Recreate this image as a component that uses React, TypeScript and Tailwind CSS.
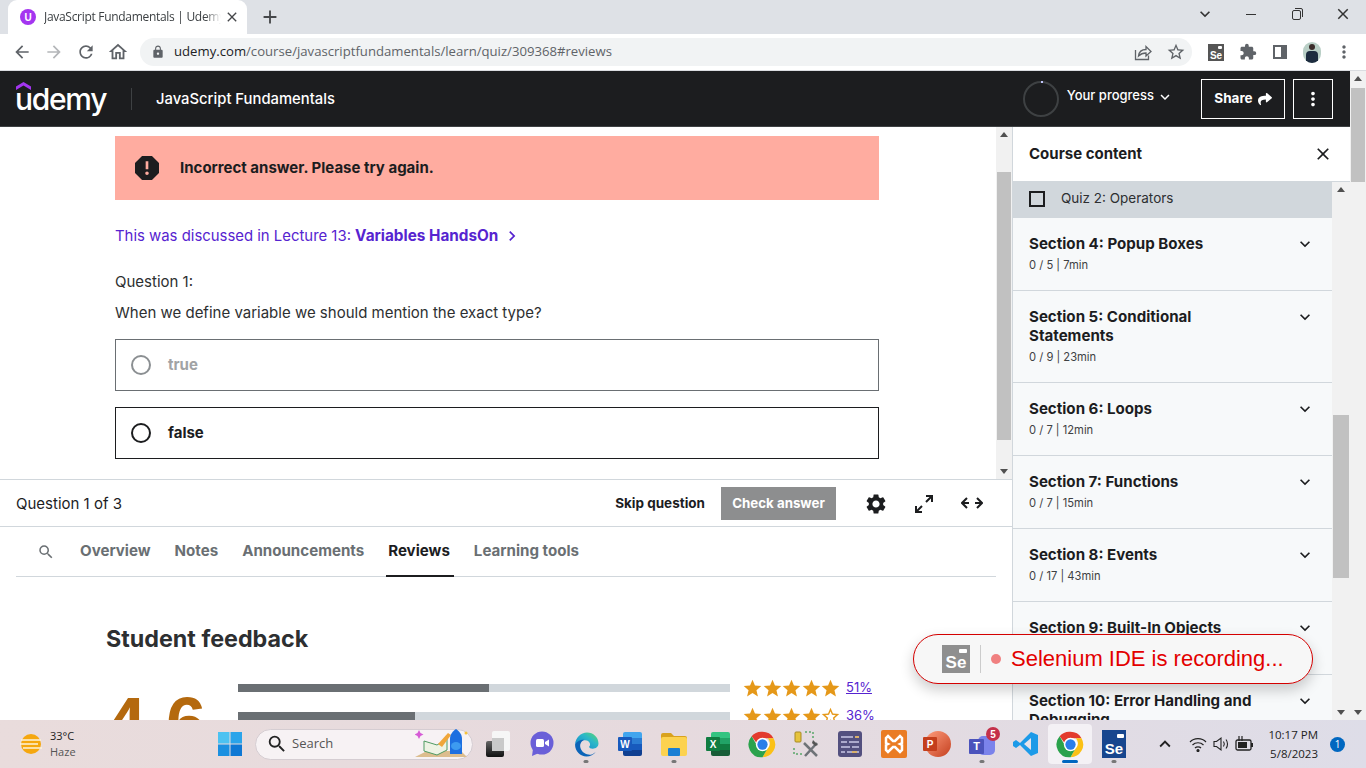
import React from "react";
import { MdArrowBack, MdArrowForward, MdRefresh, MdOutlineHome, MdLock, MdStarBorder, MdStar, MdExtension, MdMoreVert, MdKeyboardArrowDown, MdKeyboardArrowUp, MdClose, MdSettings, MdSearch, MdReport, MdChevronRight, MdAdd } from "react-icons/md";
import { FaShare } from "react-icons/fa";

const sections = [
  { title: "Section 4: Popup Boxes", meta: "0 / 5 | 7min" },
  { title: "Section 5: Conditional Statements", meta: "0 / 9 | 23min" },
  { title: "Section 6: Loops", meta: "0 / 7 | 12min" },
  { title: "Section 7: Functions", meta: "0 / 7 | 15min" },
  { title: "Section 8: Events", meta: "0 / 17 | 43min" },
  { title: "Section 9: Built-In Objects", meta: "0 / 4 | 10min" },
  { title: "Section 10: Error Handling and Debugging", meta: "0 / 3 | 8min" },
];

const tabs = [
  { name: "Overview", cls: "mx-[12px] border-transparent" },
  { name: "Notes", cls: "mx-[12px] border-transparent" },
  { name: "Announcements", cls: "mx-[12px] border-transparent" },
  { name: "Reviews", cls: "ml-[10px] mr-[8px] pl-[2px] pr-[4px] border-[#1c1d1f] text-[#1c1d1f]" },
  { name: "Learning tools", cls: "mx-[12px] border-transparent" },
];

function Scrollbar({ top, height, className }: { top: number; height: number; className?: string }) {
  return (
    <div className={`relative shrink-0 bg-[#f1f1f1] ${className ?? "w-4"}`}>
      <div className="absolute left-1/2 top-[5px] h-0 w-0 -translate-x-1/2 border-x-[4px] border-b-[5px] border-x-transparent border-b-[#505050]" />
      <div className="absolute left-px right-px bg-[#c1c1c1]" style={{ top, height }} />
      <div className="absolute bottom-[5px] left-1/2 h-0 w-0 -translate-x-1/2 border-x-[4px] border-t-[5px] border-x-transparent border-t-[#505050]" />
    </div>
  );
}

function Stars({ filled }: { filled: number }) {
  return (
    <div className="flex w-[98px] text-[#e59819]">
      {[0, 1, 2, 3, 4].map((i) =>
        i < filled ? (
          <MdStar key={i} size={21} className="mr-[-1.500px] shrink-0" />
        ) : (
          <MdStarBorder key={i} size={21} className="mr-[-1.500px] shrink-0" />
        )
      )}
    </div>
  );
}

function ChromeIcon({ size = 30 }: { size?: number }) {
  return (
    <svg width={size} height={size} viewBox="0 0 48 48">
      <path d="M24 3a21 21 0 0 1 18.200 10.500H24a10.500 10.500 0 0 0-10 7.500L6 10.400A21 21 0 0 1 24 3z" fill="#e33b2e" />
      <path d="M42.200 13.500A21 21 0 0 1 24 45l9-15.500a10.500 10.500 0 0 0-.5-16z" fill="#fbc116" />
      <path d="M24 45A21 21 0 0 1 6 10.400l9 15.600a10.500 10.500 0 0 0 18 3.500z" fill="#2ba24c" />
      <circle cx="24" cy="24" r="11" fill="#fff" />
      <circle cx="24" cy="24" r="8.500" fill="#2a7de9" />
    </svg>
  );
}

function SeBadge({ className, text }: { className: string; text: string }) {
  return (
    <div className={`relative flex flex-col items-center justify-end font-['Liberation_Sans',sans-serif] font-bold leading-none text-white ${className}`}>
      <span className="absolute right-[10%] top-[14%] h-[16%] w-[28%] rounded-[1px] bg-white" />
      <span className={text}>Se</span>
    </div>
  );
}

function TaskIcon({ children, dot, active }: { children: React.ReactNode; dot?: boolean; active?: boolean }) {
  return (
    <div className={`relative flex h-[40px] w-[44px] shrink-0 items-center justify-center rounded ${active ? "bg-[#f4f1f5]" : ""}`}>
      {children}
      {dot && <span className="absolute bottom-[1px] left-1/2 h-[3px] w-[5px] -translate-x-1/2 rounded-full bg-[#777]" />}
      {active && <span className="absolute bottom-[1px] left-1/2 h-[3px] w-[16px] -translate-x-1/2 rounded-full bg-[#0067c0]" />}
    </div>
  );
}

function OfficeIcon({ letter, stripes, tile }: { letter: string; stripes: string[]; tile: string }) {
  return (
    <div className="relative h-[24px] w-[24px]">
      <div className="absolute right-0 top-0 flex h-[24px] w-[19px] flex-col overflow-hidden rounded-[2px]">
        {stripes.map((c) => (
          <span key={c} className="flex-1" style={{ backgroundColor: c }} />
        ))}
      </div>
      <span className={`absolute left-0 top-[5px] flex h-[14px] w-[14px] items-center justify-center rounded-[1px] font-['Liberation_Sans',sans-serif] text-[10px] font-bold text-white ${tile}`}>
        {letter}
      </span>
    </div>
  );
}

function Taskbar() {
  return (
    <div className="flex h-[48px] shrink-0 items-center bg-gradient-to-r from-[#e9dcdc] via-[#e6dade] to-[#dedde8] font-['Open_Sans',sans-serif] text-[#222]">
      <div className="flex w-[218px] shrink-0 items-center pl-[20px]">
        <svg width="22" height="26" viewBox="0 0 22 26">
          <circle cx="11" cy="13" r="10" fill="#f5a70f" />
          <path d="M1 9h20M0 13h18M3 17h19" stroke="#fdf3dc" strokeWidth="1.500" />
        </svg>
        <div className="ml-[8px] text-[11px] leading-[16px]">
          <div>33°C</div>
          <div className="text-[#555]">Haze</div>
        </div>
      </div>
      <svg width="24" height="24" viewBox="0 0 24 24" className="mr-[13px] shrink-0">
        <rect x="0" y="0" width="11.500" height="11.500" fill="#4cc2f1" />
        <rect x="12.500" y="0" width="11.500" height="11.500" fill="#2ba4ea" />
        <rect x="0" y="12.500" width="11.500" height="11.500" fill="#1b90e0" />
        <rect x="12.500" y="12.500" width="11.500" height="11.500" fill="#0f78d4" />
      </svg>
      <div className="relative flex h-[31px] w-[218px] shrink-0 items-center rounded-full border border-[#d5cdd2] bg-[#f7f2f4] pl-[10px] text-[13px] text-[#555]">
        <MdSearch size={22} className="text-[#222]" />
        <span className="ml-[4px]">Search</span>
        <svg width="54" height="32" viewBox="0 0 54 32" className="absolute -top-[2px] right-[3px]">
          <path d="M0 29l12-6h34l6 6z" fill="#dcbd8e" />
          <path d="M9 13l13 4 10-6v11l-10 5-13-4z" fill="#eef3e4" stroke="#4f9b63" />
          <path d="M23 16l10-11 3 2-9 12z" fill="#f0a63a" />
          <path d="M4 2l1.500 3 3 1.500-3 1.500-1.500 3-1.500-3-3-1.500 3-1.500z" fill="#d65bd6" />
          <path d="M35 26V11c0-5 3-8 6-10 3 2 6 5 6 10v15z" fill="#1d6fe0" />
          <ellipse cx="41" cy="18" rx="5" ry="4" fill="#3d9bf0" />
          <circle cx="51" cy="5" r="1.500" fill="#f5c33b" />
        </svg>
      </div>
      <div className="ml-[3px] flex items-center">
        <TaskIcon>
          <div className="relative h-[27px] w-[24px]">
            <span className="absolute right-0 top-0 h-[20px] w-[18px] rounded-[2px] bg-[#f6f6f6]" />
            <span className="absolute bottom-[1px] left-0 h-[16px] w-[18px] rounded-[2px] bg-gradient-to-b from-[#666] to-[#111]" />
            <span className="absolute left-[6px] top-[7px] h-[13px] w-[12px] bg-[#c9c9c9]" />
          </div>
        </TaskIcon>
        <TaskIcon>
          <svg width="24" height="26" viewBox="0 0 24 26">
            <circle cx="12" cy="12" r="11.500" fill="#6a5fd8" />
            <path d="M3 18l-1 7 7-3z" fill="#6a5fd8" />
            <rect x="6" y="8" width="8" height="8" rx="1.500" fill="#fff" />
            <path d="M15 11l4-2.500v7L15 13z" fill="#fff" />
          </svg>
        </TaskIcon>
        <TaskIcon dot>
          <svg width="25" height="25" viewBox="0 0 48 48">
            <defs>
              <linearGradient id="edgeA" x1="0" y1="1" x2="1" y2="0">
                <stop offset="0" stopColor="#0f7fd0" />
                <stop offset="0.6" stopColor="#2bb8c8" />
                <stop offset="1" stopColor="#5fd86a" />
              </linearGradient>
            </defs>
            <path d="M2 24C3 11 13 1 25 1c12 0 22 9 22 21 0 6-5 10-11 10-4 0-7-1-7-4 4-2 2-12-8-12-10 0-16 5-19 8z" fill="url(#edgeA)" />
            <path d="M2 24c3-6 12-10 18-9-7 3-10 10-7 17 3 8 13 13 21 11 3-1 6-3 8-5-4 6-11 9-18 9C12 47 2 37 2 24z" fill="#0c64b8" />
          </svg>
        </TaskIcon>
        <TaskIcon>
          <OfficeIcon letter="W" tile="bg-[#185abd]" stripes={["#41a5ee", "#2b7cd3", "#185abd", "#103f91"]} />
        </TaskIcon>
        <TaskIcon dot>
          <svg width="26" height="24" viewBox="0 0 26 24">
            <path d="M0 3a2 2 0 0 1 2-2h8l3 3h11a2 2 0 0 1 2 2v3H0z" fill="#d9a21e" />
            <rect x="0" y="5" width="26" height="19" rx="2" fill="#fcd24f" />
            <rect x="7" y="16" width="12" height="8" rx="1" fill="#1b7fd4" />
          </svg>
        </TaskIcon>
        <TaskIcon>
          <OfficeIcon letter="X" tile="bg-[#107c41]" stripes={["#33c481", "#21a366", "#107c41", "#185c37"]} />
        </TaskIcon>
        <TaskIcon>
          <ChromeIcon size={29} />
        </TaskIcon>
        <TaskIcon>
          <svg width="26" height="28" viewBox="0 0 26 28">
            <rect x="2" y="2" width="6" height="10" rx="1" fill="#e6c33d" stroke="#a78a24" />
            <path d="M12 2h8v6M1 18v6h8" fill="none" stroke="#5aa66a" strokeWidth="1.500" strokeDasharray="2 2" />
            <path d="M11 13l13 13M24 13L12 26" stroke="#6f7378" strokeWidth="2.500" />
            <path d="M20 10l5 5-3 1-3-3z" fill="#555" />
          </svg>
        </TaskIcon>
        <TaskIcon>
          <svg width="24" height="26" viewBox="0 0 24 26">
            <rect width="24" height="26" rx="3" fill="#53507f" />
            <path d="M3 6h12M17 6h4M3 11h6M11 11h10M3 16h9M14 16h7M3 21h4M9 21h12" stroke="#c9c6e6" strokeWidth="1.500" />
            <path d="M14 21h5M17 6h4" stroke="#e9b44c" strokeWidth="1.500" />
          </svg>
        </TaskIcon>
        <TaskIcon>
          <svg width="26" height="28" viewBox="0 0 26 28">
            <rect width="26" height="28" rx="2" fill="#ea7c24" />
            <path d="M7 6l5 5h2l5-5 2 2v5l-2 1 2 1v5l-2 2-5-5h-2l-5 5-2-2v-5l2-1-2-1V8z" fill="none" stroke="#fff" strokeWidth="2.500" />
          </svg>
        </TaskIcon>
        <TaskIcon>
          <div className="relative h-[26px] w-[26px]">
            <span className="absolute right-0 top-0 h-[26px] w-[26px] rounded-full bg-gradient-to-br from-[#ff9d7d] to-[#c43e1c]" />
            <span className="absolute left-[-2px] top-[6px] flex h-[14px] w-[14px] items-center justify-center rounded-[1px] bg-[#c43e1c] font-['Liberation_Sans',sans-serif] text-[10px] font-bold text-white">P</span>
          </div>
        </TaskIcon>
        <TaskIcon dot>
          <div className="relative h-[26px] w-[26px]">
            <span className="absolute right-0 top-[5px] h-[19px] w-[17px] rounded-[5px] bg-[#7b83eb]" />
            <span className="absolute left-0 top-[8px] flex h-[15px] w-[15px] items-center justify-center rounded-[1px] bg-[#4b53bc] font-['Liberation_Sans',sans-serif] text-[11px] font-bold text-white">T</span>
            <span className="absolute -right-[5px] -top-[4px] flex h-[14px] w-[14px] items-center justify-center rounded-full bg-[#c4314b] font-['Liberation_Sans',sans-serif] text-[10px] font-bold text-white">5</span>
          </div>
        </TaskIcon>
        <TaskIcon>
          <svg width="26" height="26" viewBox="0 0 26 26">
            <path d="M18 1l7 3v18l-7 3L7 14l-4 3-3-2v-4l3-2 4 3z" fill="#1c9ae8" />
            <path d="M18 7v12l-7-6z" fill="#e6e2ea" />
          </svg>
        </TaskIcon>
        <TaskIcon active>
          <ChromeIcon size={29} />
        </TaskIcon>
        <TaskIcon dot>
          <SeBadge className="h-[28px] w-[24px] bg-[#17468e] pb-[2px]" text="text-[15px]" />
        </TaskIcon>
      </div>
      <MdKeyboardArrowUp size={22} className="ml-[18px] shrink-0 text-[#222]" />
      <svg width="18" height="15" viewBox="0 0 18 15" className="ml-[13px] shrink-0" fill="none" stroke="#222" strokeWidth="1.200">
        <path d="M1 5c4-4.500 12-4.500 16 0M3.500 8c3-3 8-3 11 0M6 11c1.500-1.500 4.500-1.500 6 0" />
        <circle cx="9" cy="13.500" r="1" fill="#222" />
      </svg>
      <svg width="17" height="16" viewBox="0 0 17 16" className="ml-[6px] shrink-0" fill="none" stroke="#222" strokeWidth="1.100">
        <path d="M1 5.500h2.500L8 2v12l-4.500-3.500H1zM10.500 5.500c1 1.500 1 3.500 0 5M13 3.500c2 2.500 2 6.500 0 9" />
      </svg>
      <svg width="20" height="16" viewBox="0 0 20 16" className="ml-[4px] shrink-0">
        <rect x="2" y="4" width="15" height="10" rx="1.500" fill="none" stroke="#222" strokeWidth="1.300" />
        <rect x="4" y="6" width="9" height="6" fill="#222" />
        <rect x="17" y="7" width="2" height="4" fill="#222" />
        <path d="M5 0v5M8 0v5" stroke="#222" strokeWidth="1.200" />
      </svg>
      <div className="ml-[8px] w-[56px] shrink-0 text-right text-[11.500px] leading-[19px]">
        <div>10:17 PM</div>
        <div>5/8/2023</div>
      </div>
      <span className="ml-[12px] flex h-[15px] w-[15px] shrink-0 items-center justify-center rounded-full bg-[#0067c0] text-[10px] text-white">1</span>
    </div>
  );
}

function BrowserChrome() {
  return (
    <div className="shrink-0 font-['Liberation_Sans',sans-serif]">
      <div className="flex h-[34px] items-end bg-[#dee1e6]">
        <div className="ml-[8px] flex h-[34px] w-[239px] items-center rounded-t-[9px] bg-white pl-[12px] pr-[7px]">
          <span className="flex h-[16px] w-[16px] shrink-0 items-center justify-center rounded-full bg-[#a435f0] text-[10px] font-bold text-white">
            U
          </span>
          <span className="ml-[8px] flex-1 overflow-hidden whitespace-nowrap font-['Open_Sans',sans-serif] text-[12px] tracking-[-0.3px] text-[#3c4043] [mask-image:linear-gradient(to_left,transparent,black_16px)]">
            JavaScript Fundamentals | Udemy
          </span>
          <MdClose size={16} className="ml-[3px] shrink-0 text-[#45474a]" />
        </div>
        <MdAdd size={22} className="mb-[6px] ml-[12px] text-[#45474a]" />
        <div className="flex-1" />
        <div className="mb-[10px] flex w-[184px] items-center text-[#333]">
          <div className="flex w-[46px] justify-center"><MdKeyboardArrowDown size={20} /></div>
          <div className="flex w-[46px] justify-center"><span className="h-px w-[10px] bg-[#333]" /></div>
          <div className="flex w-[46px] justify-center">
            <svg width="11" height="12" viewBox="0 0 11 12" fill="none" stroke="#333">
              <rect x="0.500" y="2.500" width="8" height="9" rx="1.500" />
              <path d="M3 0.500h6a1.500 1.500 0 0 1 1.500 1.500v7" />
            </svg>
          </div>
          <div className="flex w-[46px] justify-center"><MdClose size={18} /></div>
        </div>
      </div>
      <div className="flex h-[37px] items-center border-b border-[#dadce0] bg-white">
        <div className="flex w-[140px] shrink-0 items-center text-[#5f6368]">
          <div className="flex w-[32px] justify-center pl-[12px]"><MdArrowBack size={20} /></div>
          <div className="ml-[11px] flex w-[22px] justify-center text-[#b4b6b9]"><MdArrowForward size={20} /></div>
          <div className="ml-[10px] flex w-[22px] justify-center"><MdRefresh size={20} /></div>
          <div className="ml-[10px] flex w-[22px] justify-center"><MdOutlineHome size={24} /></div>
        </div>
        <div className="flex h-[28px] w-[1052px] shrink-0 items-center rounded-full bg-[#f1f3f4] pl-[11px] font-['Open_Sans',sans-serif] text-[13.150px] text-[#5f6368]">
          <MdLock size={14} />
          <span className="ml-[9px]">
            <span className="text-[#202124]">udemy.com</span>/course/javascriptfundamentals/learn/quiz/309368#reviews
          </span>
          <div className="flex-1" />
          <svg width="18" height="18" viewBox="0 0 18 18" className="mr-[14px]" fill="none" stroke="#5f6368" strokeWidth="1.300">
            <path d="M1.500 7v9.500h13v-4" />
            <path d="M4.500 13c.5-4 3.500-6.500 7.500-6.500V3.500l5 5-5 4.500v-3c-3 0-5.500 1-7.500 3z" />
          </svg>
          <MdStarBorder size={20} className="mr-[6px]" />
        </div>
        <div className="flex flex-1 items-center text-[#5f6368]">
          <div className="flex w-[40px] justify-start pl-[16px]">
            <SeBadge className="h-[17px] w-[16px] bg-[#555]" text="text-[10px]" />
          </div>
          <div className="flex w-[32px] justify-center"><MdExtension size={18} /></div>
          <div className="flex w-[32px] justify-center">
            <span className="h-[14px] w-[14px] border-2 border-r-[6px] border-[#5f6368] bg-white" />
          </div>
          <div className="flex w-[32px] justify-center">
            <span className="relative h-[21px] w-[18px] overflow-hidden rounded-full bg-[#b9cfc6]">
              <span className="absolute left-[6px] top-[2px] h-[6px] w-[6px] rounded-full bg-[#3a2c2a]" />
              <span className="absolute bottom-0 left-[3px] h-[12px] w-[12px] rounded-t bg-[#1d2c3f]" />
            </span>
          </div>
          <div className="flex w-[32px] justify-center"><MdMoreVert size={20} /></div>
        </div>
      </div>
    </div>
  );
}

function CourseHeader() {
  return (
    <div className="flex h-[56px] shrink-0 items-center border-b border-[#3e4143] bg-[#1c1d1f] text-white">
      <div className="relative ml-[15px] w-[92px] shrink-0 font-['Inter',sans-serif] text-[30px] font-medium leading-none tracking-[-1.300px]">
        <svg width="15" height="8" viewBox="0 0 15 8" className="absolute -top-[2px] left-[1px]">
          <path d="M7.500 0L15 4.500V8L7.500 3.500 0 8V4.500z" fill="#a435f0" />
        </svg>
        udemy
      </div>
      <span className="ml-[24px] h-[22px] w-px bg-[#3e4143]" />
      <span className="ml-[24px] mt-[1px] font-['Inter',sans-serif] text-[14.800px] font-medium">JavaScript Fundamentals</span>
      <div className="flex-1" />
      <div className="relative h-[36px] w-[36px] rounded-full border-2 border-[#3e4143]">
        <span className="absolute -top-[2px] left-1/2 h-[2px] w-[2px] bg-[#c0c4fc]" />
      </div>
      <span className="ml-[8px] -mt-[6px] font-['Inter',sans-serif] text-[13px] font-medium">Your progress</span>
      <MdKeyboardArrowDown size={18} className="ml-[2px] -mt-[3px]" />
      <div className="ml-[27px] flex h-[40px] w-[84px] items-center justify-center border border-white font-['Inter',sans-serif] text-[13.500px] font-bold">
        Share
        <FaShare size={14} className="ml-[5px]" />
      </div>
      <div className="ml-[8px] mr-[17px] flex h-[40px] w-[40px] items-center justify-center border border-white">
        <MdMoreVert size={22} />
      </div>
    </div>
  );
}

function QuizPane() {
  return (
    <div className="flex h-[353px] shrink-0 overflow-hidden border-b border-[#d1d7dc]">
      <div className="w-[996px] shrink-0 pl-[115px] pr-[117px] pt-[9px] text-[14.900px] text-[#2d2f31]">
        <div className="flex h-[64px] items-center bg-[#ffaca0] pl-[16px] font-bold">
          <MdReport size={32} className="shrink-0 text-[#1c1d1f]" />
          <span className="ml-[17px] text-[15px] text-[#1c1d1f]">Incorrect answer. Please try again.</span>
        </div>
        <div className="mt-[26px] flex h-[20px] items-center text-[#5624d0]">
          This was discussed in Lecture 13:&nbsp;<span className="text-[15.300px] font-bold">Variables HandsOn</span>
          <MdChevronRight size={20} className="ml-[4px]" />
        </div>
        <div className="mt-[26px] h-[20px] text-[15px] leading-[20px]">Question 1:</div>
        <div className="mt-[11px] h-[20px] text-[15px] leading-[20px]">When we define variable we should mention the exact type?</div>
        <div className="mt-[16px] flex h-[52px] items-center border border-[#6a6f73] pl-[15px]">
          <span className="h-[20px] w-[20px] rounded-full border-2 border-[#8b8f92]" />
          <span className="ml-[17px] text-[15px] font-bold text-[#a1a3a5]">true</span>
        </div>
        <div className="mt-[16px] flex h-[52px] items-center border border-[#1c1d1f] pl-[15px]">
          <span className="h-[20px] w-[20px] rounded-full border-2 border-[#1c1d1f]" />
          <span className="ml-[17px] text-[15px] font-bold text-[#1c1d1f]">false</span>
        </div>
      </div>
      <Scrollbar top={45} height={268} />
    </div>
  );
}

function QuizFooter() {
  return (
    <div className="flex h-[47px] shrink-0 items-center border-b border-[#d1d7dc] pt-[1px] text-[#1c1d1f]">
      <span className="ml-[16px] mt-[2px] text-[15px]">Question 1 of 3</span>
      <div className="flex-1" />
      <span className="text-[13.500px] font-bold">Skip question</span>
      <div className="ml-[16px] flex h-[33px] w-[115px] items-center justify-center bg-[#8d8e8f] text-[13.300px] font-bold text-white">
        Check answer
      </div>
      <MdSettings size={24} className="ml-[28px]" />
      <svg width="20" height="20" viewBox="0 0 20 20" className="ml-[26px]" fill="none" stroke="#1c1d1f" strokeWidth="2">
        <path d="M12 2h6v6M18 2l-6 6M8 18H2v-6M2 18l6-6" />
      </svg>
      <svg width="22" height="12" viewBox="0 0 22 12" className="mb-[2px] ml-[27px] mr-[29px]" fill="none" stroke="#1c1d1f" strokeWidth="2">
        <path d="M6 1L1 6l5 5M1 6h7M16 1l5 5-5 5M21 6h-7" />
      </svg>
    </div>
  );
}

function ReviewTabs() {
  return (
    <div className="ml-[16px] flex h-[50px] w-[980px] shrink-0 items-stretch border-b border-[#d1d7dc] text-[15.100px] font-bold text-[#6a6f73]">
      <div className="flex w-[52px] items-center pl-[21px]">
        <MdSearch size={18} />
      </div>
      <div className="flex">
        {tabs.map((t) => (
          <div key={t.name} className={`-mb-px flex items-center border-b-2 ${t.cls}`}>
            {t.name}
          </div>
        ))}
      </div>
    </div>
  );
}

function Feedback() {
  return (
    <div className="pl-[106px] pt-[48px]">
      <h2 className="h-[28px] whitespace-nowrap text-[23.300px] font-bold leading-[28px] text-[#2d2f31]">Student feedback</h2>
      <div className="mt-[31px] flex">
        <div className="w-[132px] pt-[3px] font-['Liberation_Sans',sans-serif] text-[72px] font-bold leading-[72px] text-[#b4690e]">4.6</div>
        <div className="flex flex-col gap-[20px]">
          <div className="flex h-[8px] items-center">
            <div className="h-[8px] w-[492px] bg-[#d1d7dc]">
              <div className="h-full bg-[#6a6f73]" style={{ width: 251 }} />
            </div>
            <div className="ml-[12px]"><Stars filled={5} /></div>
            <span className="ml-[6px] text-[13px] text-[#5624d0] underline">51%</span>
          </div>
          <div className="flex h-[8px] items-center">
            <div className="h-[8px] w-[492px] bg-[#d1d7dc]">
              <div className="h-full bg-[#6a6f73]" style={{ width: 177 }} />
            </div>
            <div className="ml-[12px]"><Stars filled={4} /></div>
            <span className="ml-[6px] text-[13px] text-[#5624d0] underline">36%</span>
          </div>
        </div>
      </div>
    </div>
  );
}

function Sidebar() {
  return (
    <div className="flex w-[338px] shrink-0 flex-col border-l border-[#d1d7dc] bg-white text-[#1c1d1f]">
      <div className="flex h-[55px] shrink-0 items-center justify-between border-b border-[#d1d7dc] pl-[16px] pr-[17px]">
        <span className="text-[15px] font-bold">Course content</span>
        <MdClose size={20} />
      </div>
      <div className="flex min-h-0 flex-1 overflow-hidden">
        <div className="w-[319px] shrink-0 bg-[#f7f9fa]">
          <div className="flex h-[36px] items-center bg-[#d1d7dc] pb-[2px] pl-[16px] text-[13.500px] text-[#2d2f31]">
            <span className="h-[16px] w-[16px] border-2 border-[#1c1d1f]" />
            <span className="mb-[2px] ml-[16px]">Quiz 2: Operators</span>
          </div>
          {sections.map((s) => (
            <div key={s.title} className="flex items-start border-b border-[#d1d7dc] pb-[16px] pl-[16px] pr-[17px] pt-[16px]">
              <div className="flex-1 pr-[30px]">
                <div className="text-[15.100px] font-bold leading-[19px]">{s.title}</div>
                <div className="mt-[4px] text-[11.200px] leading-[17px] text-[#3e4143]">{s.meta}</div>
              </div>
              <MdKeyboardArrowDown size={20} />
            </div>
          ))}
        </div>
        <Scrollbar top={233} height={163} className="w-[18px]" />
      </div>
    </div>
  );
}

export default function App() {
  return (
    <div className="relative flex h-[768px] w-[1366px] flex-col overflow-hidden bg-white font-['Inter',sans-serif]">
      <BrowserChrome />
      <div className="flex min-h-0 flex-1">
        <div className="flex w-[1350px] shrink-0 flex-col">
          <CourseHeader />
          <div className="flex min-h-0 flex-1">
            <div className="flex w-[1012px] shrink-0 flex-col overflow-hidden">
              <QuizPane />
              <QuizFooter />
              <ReviewTabs />
              <Feedback />
            </div>
            <Sidebar />
          </div>
        </div>
        <Scrollbar top={17} height={94} />
      </div>
      <Taskbar />

      {/* recording toast */}
      <div className="absolute left-[913px] top-[634px] flex h-[50px] w-[400px] items-center rounded-full border border-[#d40000] bg-[#f7f7f7] pl-[28px] font-['Liberation_Sans',sans-serif] shadow-[0_6px_14px_rgba(0,0,0,0.2)]">
        <SeBadge className="h-[28px] w-[28px] bg-[#8f8f8f] pb-[2px]" text="text-[17px]" />
        <span className="ml-[10px] h-[28px] w-px bg-[#ccc]" />
        <span className="ml-[10px] h-[10px] w-[10px] rounded-full bg-[#f08080]" />
        <span className="mb-[2px] ml-[10px] text-[22px] text-[#e30000]">Selenium IDE is recording...</span>
      </div>
    </div>
  );
}
